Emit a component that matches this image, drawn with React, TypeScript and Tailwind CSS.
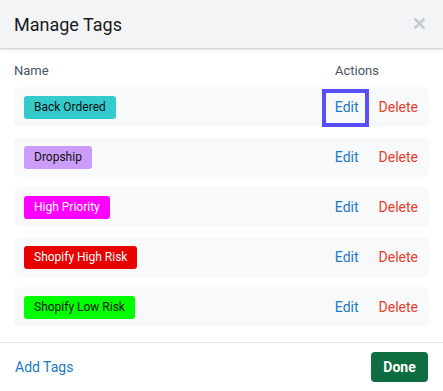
const TAGS: Array<{ name: string; tone: string }> = [
  { name: "Back Ordered", tone: "bg-[#33cbcb] text-[#111]" },
  { name: "Dropship", tone: "bg-[#cc9cfa] text-[#111]" },
  { name: "High Priority", tone: "bg-[#ff00ff] text-white" },
  { name: "Shopify High Risk", tone: "bg-[#e80000] text-white" },
  { name: "Shopify Low Risk", tone: "bg-[#00ff00] text-[#111]" },
];

export default function App() {
  return (
    <div className="flex h-[391px] w-[443px] flex-col bg-white font-['Roboto',sans-serif]">
      <div className="relative z-10 flex h-[49px] shrink-0 items-center justify-between border-b border-[#d4d7dc] bg-[#f3f4f6] pl-[14px] pr-[18px] shadow-[0_1px_2px_rgba(0,0,0,0.12)]">
        <h1 className="text-[18px] text-[#1a1a1a]">Manage Tags</h1>
        <svg width="11" height="11" viewBox="0 0 11 11" className="mb-[1px]">
          <path d="M1.5 1.5 L9.5 9.5 M9.5 1.5 L1.5 9.5" stroke="#c3cbd3" strokeWidth="2.6" strokeLinecap="square" />
        </svg>
      </div>

      <div className="flex-1 px-[14px]">
        <div className="mt-[12px] flex h-[20px] items-center text-[13px] text-[#4b5563]">
          <span className="flex-1">Name</span>
          <span className="w-[94px]">Actions</span>
        </div>
        <div className="mt-[6px] flex flex-col gap-[10px]">
          {TAGS.map((t, i) => (
            <div key={t.name} className="flex h-[40px] items-center rounded-[6px] bg-[#f8f9fb] pl-[10px] pr-[11px]">
              <span className={`flex h-[23px] items-center rounded-[3px] px-[10px] text-[12px] ${t.tone}`}>{t.name}</span>
              <div className="ml-auto flex items-center gap-[20px] text-[14px] leading-[20px]">
                <span className="relative text-[#1b7ac6]">
                  Edit
                  {i === 0 && (
                    <span className="absolute -bottom-[10px] -left-[13px] -right-[10px] -top-[8px] border-[4px] border-[#5a4ff7]" />
                  )}
                </span>
                <span className="text-[#e6402b]">Delete</span>
              </div>
            </div>
          ))}
        </div>
      </div>

      <div className="flex h-[49px] shrink-0 items-center justify-between rounded-b-[4px] border-t border-[#dde3e9] pl-[15px] pr-[15px]">
        <span className="text-[14px] text-[#1b7ac6]">Add Tags</span>
        <button type="button" className="h-[30px] w-[57px] rounded-[4px] bg-[#0f6e41] text-[14px] font-bold text-white">
          Done
        </button>
      </div>
    </div>
  );
}
